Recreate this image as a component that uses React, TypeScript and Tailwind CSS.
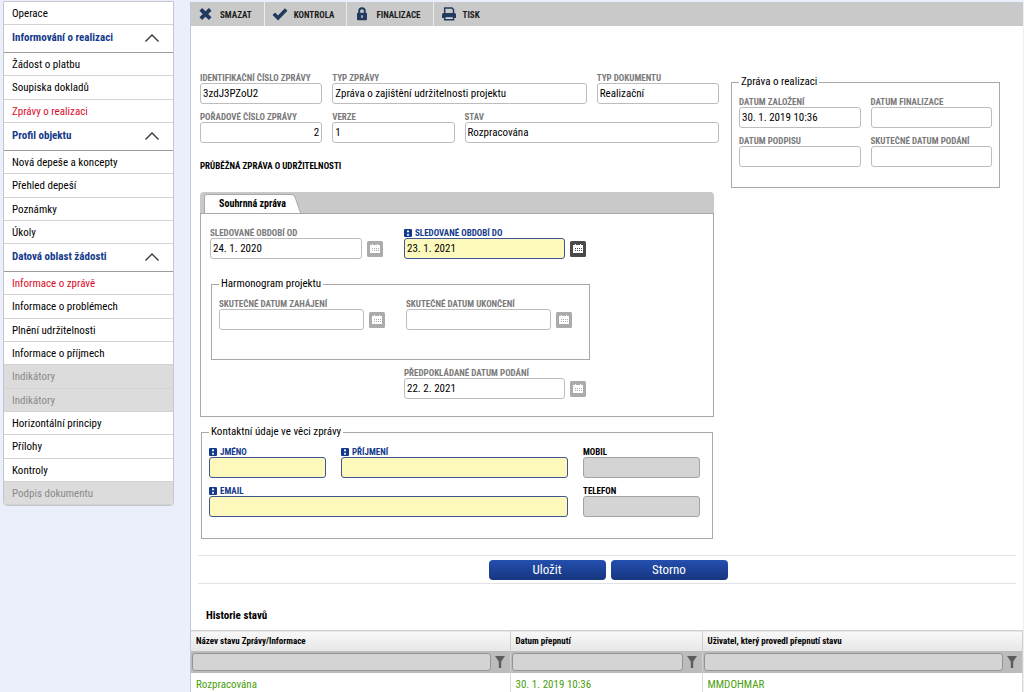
import React, { useId } from "react";

interface NavItem {
  label: string;
  state?: "active" | "disabled";
}

interface NavGroup {
  title?: string;
  items: NavItem[];
}

const navGroups: NavGroup[] = [
  { items: [{ label: "Operace" }] },
  {
    title: "Informování o realizaci",
    items: [
      { label: "Žádost o platbu" },
      { label: "Soupiska dokladů" },
      { label: "Zprávy o realizaci", state: "active" },
    ],
  },
  {
    title: "Profil objektu",
    items: [
      { label: "Nová depeše a koncepty" },
      { label: "Přehled depeší" },
      { label: "Poznámky" },
      { label: "Úkoly" },
    ],
  },
  {
    title: "Datová oblast žádosti",
    items: [
      { label: "Informace o zprávě", state: "active" },
      { label: "Informace o problémech" },
      { label: "Plnění udržitelnosti" },
      { label: "Informace o příjmech" },
      { label: "Indikátory", state: "disabled" },
      { label: "Indikátory", state: "disabled" },
      { label: "Horizontální principy" },
      { label: "Přílohy" },
      { label: "Kontroly" },
      { label: "Podpis dokumentu", state: "disabled" },
    ],
  },
];

const navColors = {
  normal: "text-black",
  active: "text-[#dc0a28]",
  disabled: "bg-[#dcdcdc] text-[#8a8a8a]",
};

function Sidebar() {
  return (
    <nav className="mx-[3px] mt-px w-[171px] shrink-0 self-start rounded-b-sm border border-[#c4c6cc] bg-white text-[11px]">
      {navGroups.map((group, idx) => (
        <div key={idx}>
          {group.title && (
            <button
              type="button"
              className="flex h-7 w-full items-center justify-between border-b border-[#9c9c9c] pl-2 pr-[13px] pb-px font-bold text-[#143a8c]"
            >
              {group.title}
              <svg viewBox="0 0 16 10" className="h-[10px] w-4" fill="none" stroke="#333" strokeWidth="1.3">
                <path d="M1.5 8.5 8 2l6.500 6.500" />
              </svg>
            </button>
          )}
          <ul>
            {group.items.map((item, i) => (
              <li
                key={i}
                className="h-[23px] border-b border-[#d3d3d3] nth-[3n+2]:h-6"
              >
                <a href="#" className={`block h-full pl-2 leading-6 ${navColors[item.state ?? "normal"]}`}>
                  {item.label}
                </a>
              </li>
            ))}
          </ul>
        </div>
      ))}
    </nav>
  );
}

const DeleteIcon = (
  <svg viewBox="0 0 16 16" className="size-4" fill="none" stroke="#213a5e" strokeWidth="3.8">
    <path d="m2.800 3.300 9.400 9.400M12.200 3.300l-9.400 9.400" />
  </svg>
);

const CheckIcon = (
  <svg viewBox="0 0 16 16" className="size-4" fill="none" stroke="#213a5e" strokeWidth="3.6">
    <path d="m1.800 7.800 4.200 4.200L14.200 3.500" />
  </svg>
);

const LockIcon = (
  <svg viewBox="0 0 16 16" className="size-4">
    <path d="M5.200 7.500V5a2.800 2.800 0 0 1 5.600 0v2.500" fill="none" stroke="#213a5e" strokeWidth="1.900" />
    <rect x="3" y="6.800" width="10" height="7.400" rx="1" fill="#213a5e" />
    <path d="M8 9.200v2.800" stroke="#c9c9c9" strokeWidth="1.500" />
  </svg>
);

const PrintIcon = (
  <svg viewBox="0 0 16 16" className="size-4">
    <path d="M3.700 7V2h7.300l1.500 1.500V7" fill="none" stroke="#213a5e" strokeWidth="1.500" />
    <path d="M1 8.500A1.500 1.500 0 0 1 2.500 7h11A1.500 1.500 0 0 1 15 8.500V12H1z" fill="#213a5e" />
    <path d="M3.700 10.500h8.800v3.300H3.700z" fill="#d6d9df" stroke="#213a5e" strokeWidth="1.500" />
  </svg>
);

function Toolbar() {
  const actions = [
    { label: "SMAZAT", icon: DeleteIcon },
    { label: "KONTROLA", icon: CheckIcon },
    { label: "FINALIZACE", icon: LockIcon },
    { label: "TISK", icon: PrintIcon },
  ];
  return (
    <div className="flex h-6 bg-[#c9c9c9]">
      {actions.map((action) => (
        <button
          key={action.label}
          type="button"
          className="flex items-center gap-[6px] border-r border-[#ececec] pl-[7px] pr-3 text-[9px] font-bold leading-4 text-[#1c1c1c] last:border-0"
        >
          {action.icon}
          <span className="pt-px">{action.label}</span>
        </button>
      ))}
    </div>
  );
}

function RequiredMark() {
  return (
    <svg viewBox="0 0 8 8" className="mr-[3px] size-2 shrink-0">
      <rect width="8" height="8" rx="1" fill="#143a8c" />
      <path d="M4 1v2.500M4 4.700v2.300M3 2.500h2M3 5.800h2" stroke="#fff" strokeWidth="1" />
    </svg>
  );
}

function CalendarButton({ active, label }: { active?: boolean; label: string }) {
  const color = active ? "#4a4a4a" : "#ababab";
  return (
    <button type="button" aria-label={label} className="size-4 shrink-0">
      <svg viewBox="0 0 16 16" className="size-4">
        <rect width="16" height="16" rx="1.500" fill={color} />
        <path d="M3 4h10v8H3zM5 3h1v1H5zM10 3h1v1h-1z" fill="#fff" />
        <path
          d="M5 7h1v1H5zM7 7h1v1H7zM9 7h1v1H9zM11 7h1v1h-1zM5 9h1v1H5zM7 9h1v1H7zM9 9h1v1H9zM11 9h1v1h-1z"
          fill={color}
        />
      </svg>
    </button>
  );
}

interface FieldProps {
  label: string;
  value?: string;
  variant?: "readonly" | "required" | "optional";
  calendar?: boolean;
  alignRight?: boolean;
  className?: string;
}

const labelStyles = {
  readonly: "text-[#7a7a7a]",
  required: "text-[#143a8c]",
  optional: "text-black",
};

const inputStyles = {
  readonly: "border-[#bdbdbd] bg-white",
  required: "border-[#3f5690] bg-[#fdf9bd]",
  optional: "border-[#a3a3a3] bg-[#d4d4d4]",
};

function Field({ label, value = "", variant = "readonly", calendar, alignRight, className = "" }: FieldProps) {
  const id = useId();
  return (
    <div className={className}>
      <label
        htmlFor={id}
        className={`flex items-center whitespace-nowrap pt-[2px] text-[9px] font-bold leading-[10px] ${labelStyles[variant]}`}
      >
        {variant === "required" && <RequiredMark />}
        {label}
      </label>
      <div className="flex items-center gap-[5px]">
        <input
          id={id}
          type="text"
          defaultValue={value}
          className={`h-[21px] w-full min-w-0 rounded-[3px] border px-[2px] text-[11px] text-black ${inputStyles[variant]} ${
            alignRight ? "text-right" : ""
          }`}
        />
        {calendar && <CalendarButton active={variant === "required"} label={`Vybrat datum: ${label}`} />}
      </div>
    </div>
  );
}

function Group({ title, className, children }: { title: string; className: string; children: React.ReactNode }) {
  return (
    <fieldset className={`border border-[#a8a8a8] px-[7px] ${className}`}>
      <legend className="px-[2px] text-[11px] leading-[14px] text-black">{title}</legend>
      {children}
    </fieldset>
  );
}

function HistoryTable() {
  const columns = ["Název stavu Zprávy/Informace", "Datum přepnutí", "Uživatel, který provedl přepnutí stavu"];
  const rows = [["Rozpracována", "30. 1. 2019 10:36", "MMDOHMAR"]];
  return (
    <table className="w-full table-fixed border-collapse text-left">
      <colgroup>
        <col className="w-[319px]" />
        <col className="w-[192px]" />
        <col />
      </colgroup>
      <thead>
        <tr className="border-t border-[#d0d0d0] bg-linear-to-b from-[#f8f8f8] to-[#e6e6e6]">
          {columns.map((col) => (
            <th key={col} className="border-r border-[#cfcfcf] pb-0 pl-[5px] pt-px text-[9px] font-bold leading-[19px]">
              {col}
            </th>
          ))}
        </tr>
        <tr className="h-[22px] bg-[#bcbcbc]">
          {columns.map((col) => (
            <td key={col} className="border-r border-[#cfcfcf] p-0">
              <div className="flex items-center gap-[3px] pl-px pr-1">
                <input
                  type="text"
                  aria-label={`Filtr: ${col}`}
                  className="h-[18px] min-w-0 flex-1 rounded-[3px] border border-[#959595] bg-[#d4d4d4] px-1 text-[11px]"
                />
                <button type="button" aria-label={`Filtrovat: ${col}`}>
                  <svg viewBox="0 0 12 12" className="size-3" fill="#5c5c5c">
                    <path d="M1 0h10L7.200 5.500V12H4.800V5.500z" />
                  </svg>
                </button>
              </div>
            </td>
          ))}
        </tr>
      </thead>
      <tbody>
        {rows.map((row, idx) => (
          <tr key={idx}>
            {row.map((cell) => (
              <td
                key={cell}
                className="border-r border-[#d8d8d8] pb-0 pl-[5px] pt-1 text-[11px] leading-[15px] text-[#4aa00c]"
              >
                {cell}
              </td>
            ))}
          </tr>
        ))}
      </tbody>
    </table>
  );
}

export default function App() {
  return (
    <div className="flex min-h-screen bg-[#ebeefb] font-['Roboto_Condensed','Liberation_Sans_Narrow',Roboto,sans-serif]">
      <Sidebar />

      <main className="ml-[13px] mr-px mt-[2px] min-w-0 flex-1 border-l border-[#c3c8d4] bg-white">
        <Toolbar />

        <div className="flex gap-3 pl-[9px] pt-[45px]">
          <div className="w-[519px] shrink-0">
            <div className="grid grid-cols-4 gap-x-[10px] gap-y-[6px]">
              <Field label="IDENTIFIKAČNÍ ČÍSLO ZPRÁVY" value="3zdJ3PZoU2" />
              <Field label="TYP ZPRÁVY" value="Zpráva o zajištění udržitelnosti projektu" className="col-span-2" />
              <Field label="TYP DOKUMENTU" value="Realizační" />
              <Field label="POŘADOVÉ ČÍSLO ZPRÁVY" value="2" alignRight />
              <Field label="VERZE" value="1" />
              <Field label="STAV" value="Rozpracována" className="col-span-2" />
            </div>

            <h1 className="mt-[17px] text-[9px] font-bold leading-[12px] text-black">
              PRŮBĚŽNÁ ZPRÁVA O UDRŽITELNOSTI
            </h1>

            <section className="mt-5 w-[514px]">
              <div className="flex h-[21px] rounded-t-sm bg-[#c9c9c9] pl-1 pt-[2px]">
                <button type="button" className="relative h-[19px] w-[97px] text-[10px] font-bold text-black">
                  <svg viewBox="0 0 97 19" className="absolute inset-0 h-[19px] w-[97px]">
                    <path d="M.5 19V3Q.5.500 3 .500H87Q90 .500 91 3L96.500 19" fill="#fff" stroke="#a8a8a8" />
                  </svg>
                  <span className="relative">Souhrnná zpráva</span>
                </button>
              </div>
              <div className="border border-[#a8a8a8] px-[9px] pb-[17px] pt-3">
                <div className="grid grid-cols-[173px_182px] gap-x-[21px]">
                  <Field label="SLEDOVANÉ OBDOBÍ OD" value="24. 1. 2020" calendar />
                  <Field label="SLEDOVANÉ OBDOBÍ DO" value="23. 1. 2021" variant="required" calendar />
                </div>
                <Group title="Harmonogram projektu" className="ml-px mt-[18px] w-[379px] pb-[29px]">
                  <div className="grid grid-cols-[166px_166px] gap-x-[21px] pt-[6px]">
                    <Field label="SKUTEČNÉ DATUM ZAHÁJENÍ" calendar />
                    <Field label="SKUTEČNÉ DATUM UKONČENÍ" calendar />
                  </div>
                </Group>
                <div className="mt-[6px] grid grid-cols-[173px_182px] gap-x-[21px]">
                  <Field label="PŘEDPOKLÁDANÉ DATUM PODÁNÍ" value="22. 2. 2021" calendar className="col-start-2" />
                </div>
              </div>
            </section>

            <Group title="Kontaktní údaje ve věci zprávy" className="ml-px mt-2 w-[512px] pb-[21px]">
              <div className="grid grid-cols-[117px_227px_117px] gap-x-[15px] gap-y-[6px] pt-[6px]">
                <Field label="JMÉNO" variant="required" />
                <Field label="PŘÍJMENÍ" variant="required" />
                <Field label="MOBIL" variant="optional" />
                <Field label="EMAIL" variant="required" className="col-span-2" />
                <Field label="TELEFON" variant="optional" />
              </div>
            </Group>
          </div>

          <Group title="Zpráva o realizaci" className="mt-1 w-[269px] shrink-0 self-start pb-5">
            <div className="grid grid-cols-2 gap-x-[10px] gap-y-[6px] pt-[6px]">
              <Field label="DATUM ZALOŽENÍ" value="30. 1. 2019 10:36" />
              <Field label="DATUM FINALIZACE" />
              <Field label="DATUM PODPISU" />
              <Field label="SKUTEČNÉ DATUM PODÁNÍ" />
            </div>
          </Group>
        </div>

        <div className="mx-[7px] mt-4 flex justify-center gap-[5px] border-y border-[#e2e2e2] pb-[3px] pl-[2px] pt-1">
          {["Uložit", "Storno"].map((label) => (
            <button
              key={label}
              type="button"
              className="h-5 w-[117px] rounded-sm bg-linear-to-b from-[#2450b0] to-[#16357f] text-[13px] leading-5 text-white"
            >
              {label}
            </button>
          ))}
        </div>

        <h2 className="mb-1 mt-[22px] pl-[15px] text-[11px] font-bold leading-5 text-black">Historie stavů</h2>
        <HistoryTable />
      </main>
    </div>
  );
}
